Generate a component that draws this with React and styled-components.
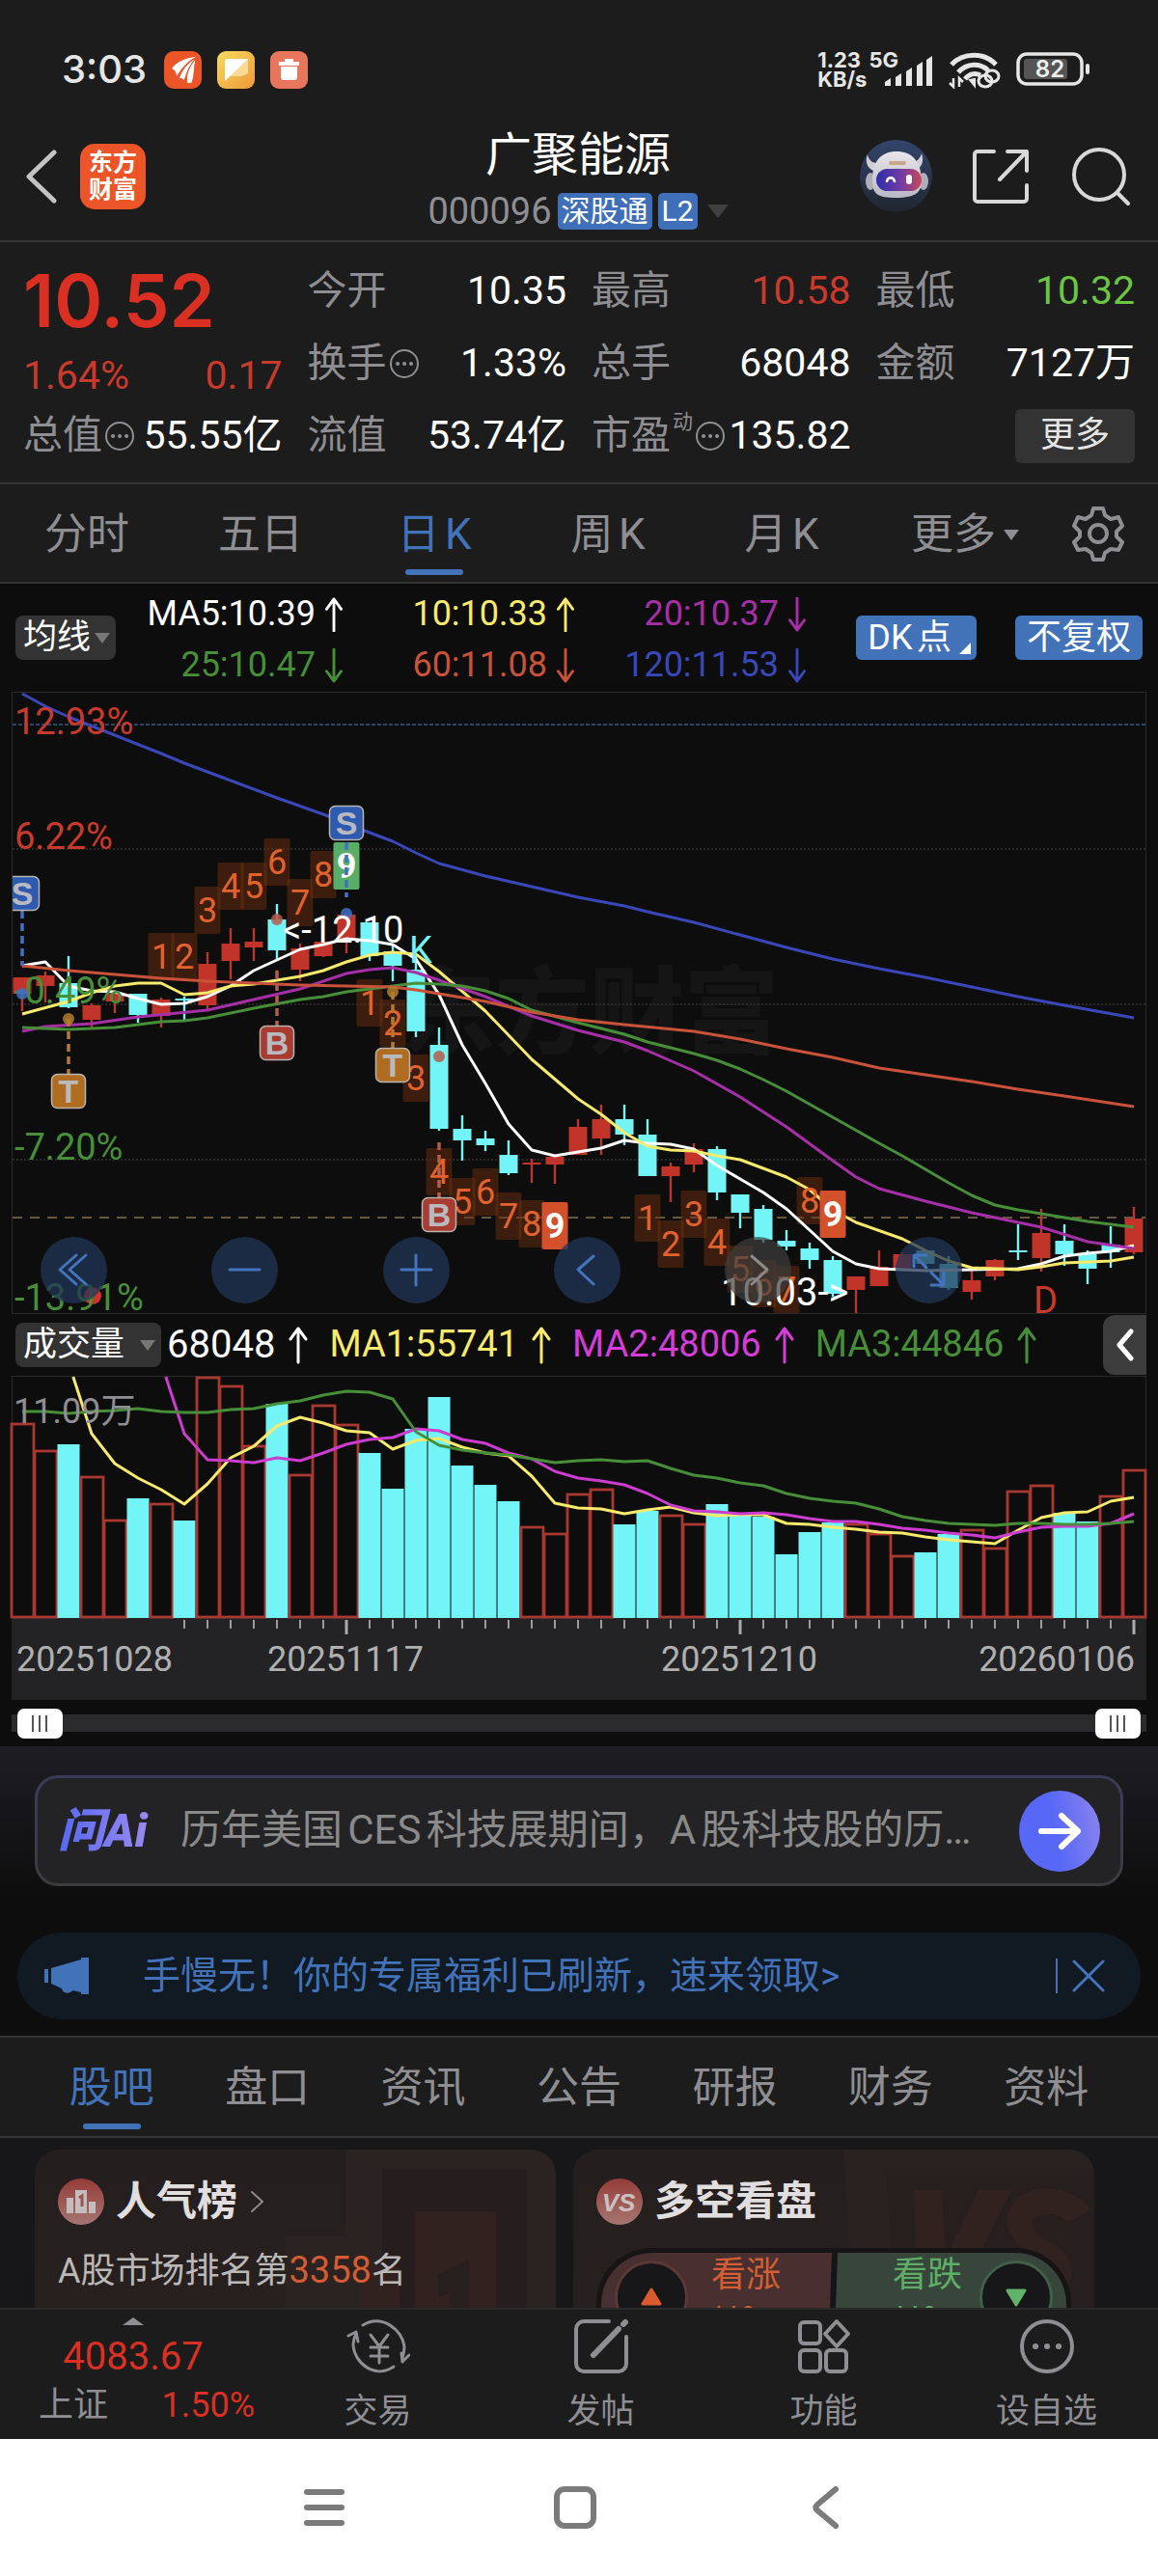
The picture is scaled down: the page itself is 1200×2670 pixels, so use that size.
import React from "react";
import styled, { createGlobalStyle, css } from "styled-components";

const GlobalStyle = createGlobalStyle`
  * { box-sizing: border-box; }
  html, body { margin: 0; background: #1c1c1c; }
  body {
    font-family: Roboto, "Noto Sans CJK SC", sans-serif;
    font-size: 36px;
    line-height: 1.2;
    color: #8e8e93;
    text-autospace: normal;
  }
  button { font: inherit; color: inherit; background: none; border: 0; padding: 0; cursor: pointer; }
  a { color: inherit; text-decoration: none; }
  svg { display: block; text-autospace: no-autospace; }
  h1, h2, p { margin: 0; font-weight: 400; }
`;

const C = {
  panel: "#1c1c1c",
  ink: "#0d0d0d",
  line: "#343436",
  red: "#c93a2c",
  brightRed: "#d93023",
  green: "#6cc644",
  blue: "#4272b8",
  cyan: "#73f4f6",
  grey: "#8e8e93",
};

/* ---------- frame ---------- */
const Phone = styled.div`
  display: flex;
  flex-direction: column;
  height: 100vh;
  background: ${C.panel};
  overflow: hidden;
`;
const Scroller = styled.main`
  flex: 1;
  min-height: 0;
  overflow: hidden;
`;

/* ---------- status bar ---------- */
const StatusBar = styled.div`
  display: flex;
  align-items: center;
  justify-content: space-between;
  padding: 38px 70px 0 64px;
  height: 106px;
  color: #e6e6e6;
`;
const Cluster = styled.div`
  display: flex;
  align-items: center;
  gap: ${(p) => p.$gap}px;
`;
const Clock = styled.span`
  font-family: Inter, sans-serif;
  font-size: 40px;
  font-weight: 500;
  margin-right: 2px;
`;
const NetSpeed = styled.span`
  font-family: Inter, sans-serif;
  font-size: 22px;
  line-height: 20px;
  font-weight: 700;
`;
const NetType = styled(NetSpeed)`
  align-self: flex-start;
  margin-right: -16px;
`;

/* ---------- title bar ---------- */
const TitleBar = styled.header`
  display: grid;
  grid-template-columns: 1fr auto 1fr;
  align-items: center;
  height: 145px;
  padding: 10px 28px 0 26px;
  border-bottom: 2px solid ${C.line};
`;
const TitleCentre = styled.div`
  display: flex;
  flex-direction: column;
  align-items: center;
  gap: 10px;
  padding-top: 6px;
`;
const StockName = styled.h1`
  font-size: 48px;
  line-height: 56px;
  color: #fff;
`;
const CodeRow = styled.div`
  display: flex;
  align-items: center;
  gap: 6px;
  font-size: 38px;
  line-height: 40px;
`;
const Tag = styled.span`
  background: #3f6fb8;
  color: #fff;
  font-size: 30px;
  line-height: 38px;
  padding: 0 4px;
  border-radius: 5px;
`;
const Caret = styled.span`
  display: inline-block;
  border: ${(p) => p.$size}px solid transparent;
  border-top: ${(p) => p.$size + 3}px solid ${(p) => p.$color};
  border-bottom: 0;
  margin-left: ${(p) => p.$gap || 0}px;
`;
const Logo = styled.a`
  display: grid;
  place-items: center;
  width: 68px;
  height: 68px;
  border-radius: 15px;
  background: #ec5528;
  color: #fff;
  font-size: 25px;
  line-height: 28px;
  font-weight: 700;
  text-align: center;
`;
const TitleTools = styled.div`
  display: flex;
  align-items: center;
  justify-content: flex-end;
  gap: 40px;
`;

/* ---------- quote ---------- */
const Quote = styled.section`
  display: grid;
  grid-template-columns: repeat(4, 1fr);
  grid-auto-rows: 75px;
  column-gap: 26px;
  padding: 13px 24px 11px;
  border-bottom: 2px solid ${C.line};
`;
const PriceBox = styled.div`
  grid-row: span 2;
  color: ${C.brightRed};
`;
const Price = styled.div`
  font-family: Inter, sans-serif;
  font-size: 76px;
  line-height: 94px;
  font-weight: 600;
`;
const ChangeRow = styled.div`
  display: flex;
  justify-content: space-between;
  line-height: 62px;
  font-size: 41px;
  color: ${C.red};
`;
const Cell = styled.div`
  display: flex;
  align-items: center;
  justify-content: space-between;
  white-space: nowrap;
  font-size: 41px;
  text-autospace: no-autospace;
`;
const CellLabel = styled.span`
  display: flex;
  align-items: center;
  gap: 2px;
`;
const CellValue = styled.span`
  color: ${(p) => p.$color || "#fff"};
`;
const Sup = styled.sup`
  font-size: 21px;
  line-height: 20px;
  align-self: flex-start;
`;
const MoreButton = styled.button`
  margin-left: auto;
  width: 124px;
  height: 56px;
  border-radius: 6px;
  background: #333;
  color: #e6e6e6;
  font-size: 36px;
`;

/* ---------- period and section tabs ---------- */
const Tabs = styled.nav`
  display: flex;
  height: ${(p) => p.$height}px;
  padding: ${(p) => p.$pad};
  border-bottom: 2px solid ${C.line};
  ${(p) => p.$top && css`border-top: 2px solid ${C.line};`}
  background: ${C.panel};
`;
const Tab = styled.button`
  flex: ${(p) => p.$grow || 45} 1 0;
  display: flex;
  align-items: center;
  justify-content: center;
  position: relative;
  padding-top: 3px;
  font-size: 44px;
  white-space: nowrap;
  color: ${(p) => (p.$on ? C.blue : C.grey)};
  &::after {
    content: "";
    display: ${(p) => (p.$on ? "block" : "none")};
    position: absolute;
    left: 50%;
    bottom: 7px;
    width: 60px;
    height: 6px;
    margin-left: -30px;
    border-radius: 3px;
    background: ${C.blue};
  }
`;
const SettingsTab = styled(Tab)`
  padding-top: 0;
`;

/* ---------- indicators ---------- */
const Dark = styled.section`
  background: ${C.ink};
`;
const MaBar = styled.div`
  display: flex;
  align-items: center;
  height: 112px;
  padding: 0 16px;
`;
const Picker = styled.button`
  display: flex;
  align-items: center;
  justify-content: center;
  height: 46px;
  padding: 0 6px 0 8px;
  border-radius: 8px;
  background: #333;
  color: #fff;
  font-size: 35px;
  white-space: nowrap;
`;
const MaGrid = styled.div`
  display: grid;
  grid-template-columns: repeat(3, 240px);
  grid-auto-rows: 53px;
  margin-right: auto;
  margin-left: -4px;
  padding-top: 4px;
`;
const Reading = styled.span`
  display: flex;
  align-items: center;
  justify-content: ${(p) => (p.$end ? "flex-end" : "flex-start")};
  gap: ${(p) => (p.$end ? 9 : 14)}px;
  font-size: ${(p) => p.$size}px;
  color: ${(p) => p.$color};
  white-space: nowrap;
`;
const BlueButton = styled.button`
  display: flex;
  align-items: flex-end;
  justify-content: center;
  height: 46px;
  line-height: 46px;
  padding: 0 12px;
  margin-left: 40px;
  border-radius: 6px;
  background: ${C.blue};
  color: #fff;
  font-size: 36px;
`;
const Corner = styled.i`
  border-left: 12px solid transparent;
  border-bottom: 12px solid #fff;
  margin: 0 -6px 6px 8px;
`;
const ChartFrame = styled.div`
  position: relative;
  margin: 0 12px;
  border: 1px solid #29292b;
  svg { width: 100%; height: auto; overflow: visible; }
`;
const ZoomBar = styled.div`
  position: absolute;
  left: 2.5%;
  right: 16.2%;
  bottom: 10px;
  display: flex;
  justify-content: space-between;
`;
const RoundButton = styled.button`
  width: 69px;
  height: 69px;
  border-radius: 50%;
  display: grid;
  place-items: center;
  background: ${(p) => (p.$off ? "rgba(62,62,62,.7)" : "rgba(34,53,87,.75)")};
  color: ${(p) => (p.$off ? "#8a8a8a" : "#4474bd")};
  && svg { width: 45px; height: 45px; }
`;
const VolumeBar = styled.div`
  display: flex;
  align-items: center;
  gap: 22px;
  height: 64px;
  padding: 0 12px 0 16px;
`;
const CollapseButton = styled.button`
  display: grid;
  place-items: center;
  width: 45px;
  height: 62px;
  margin-left: auto;
  border-radius: 12px 0 0 12px;
  background: #3c3c3c;
  color: #fff;
`;
const DateAxis = styled.div`
  margin: 0 12px;
  background: #232325;
  svg { width: 100%; height: auto; }
`;
const RangeRow = styled.div`
  display: grid;
  align-items: center;
  height: 48px;
  padding: 0 18px;
  background: linear-gradient(#2b2b2d, #2b2b2d) 12px 15px / calc(100% - 24px) 18px no-repeat;
`;
const Range = styled.input`
  grid-area: 1 / 1;
  width: 100%;
  height: 30px;
  margin: 0;
  appearance: none;
  background: none;
  pointer-events: none;
  &::-webkit-slider-thumb {
    appearance: none;
    pointer-events: auto;
    width: 47px;
    height: 31px;
    border-radius: 7px;
    background:
      linear-gradient(#555, #555) 15px 7px / 2px 17px no-repeat,
      linear-gradient(#555, #555) 22px 7px / 2px 17px no-repeat,
      linear-gradient(#555, #555) 29px 7px / 2px 17px no-repeat,
      #fff;
  }
`;

/* ---------- assistant and notice ---------- */
const AskArea = styled.section`
  padding: 30px 36px 48px;
  background: linear-gradient(#1d1d23, ${C.ink} 85%);
`;
const AskBox = styled.div`
  display: flex;
  align-items: center;
  height: 115px;
  padding: 0 21px;
  border: 3px solid transparent;
  border-radius: 24px;
  background:
    linear-gradient(#232325, #232325) padding-box,
    linear-gradient(#3a3b58, #3c3c3e) border-box;
`;
const AskLogo = styled.span`
  font-size: 48px;
  font-weight: 900;
  font-style: italic;
  line-height: 56px;
  width: 127px;
  background: linear-gradient(90deg, #5668f2, #a08cf0 80%);
  -webkit-background-clip: text;
  color: transparent;
  white-space: nowrap;
  text-autospace: no-autospace;
`;
const AskText = styled.a`
  flex: 1;
  min-width: 0;
  overflow: hidden;
  text-overflow: ellipsis;
  white-space: nowrap;
  font-size: 42px;
  color: #8a8a8a;
`;
const SendButton = styled.button`
  display: grid;
  place-items: center;
  width: 84px;
  height: 84px;
  margin-left: 24px;
  border-radius: 50%;
  background: linear-gradient(80deg, #5868f6 45%, #8c84ee);
  color: #fff;
`;
const Notice = styled.div`
  display: flex;
  align-items: center;
  height: 90px;
  margin: 0 18px;
  padding: 0 36px 0 28px;
  border-radius: 45px;
  background: #111922;
  color: ${C.blue};
`;
const NoticeText = styled.a`
  flex: 1;
  margin-left: 54px;
  font-size: 39px;
`;
const NoticeClose = styled.button`
  padding-left: 14px;
  border-left: 2px solid ${C.blue};
`;
const Spacer = styled.div`
  height: 17px;
`;

/* ---------- cards ---------- */
const Cards = styled.section`
  display: flex;
  gap: 18px;
  padding: 12px 36px;
  background: #17171a;
`;
const Card = styled.article`
  position: relative;
  flex: 0 0 540px;
  height: 260px;
  padding: 30px 24px;
  border-radius: 26px;
  background: linear-gradient(#241e1e, #28211f);
  overflow: hidden;
`;
const CardArt = styled.svg`
  position: absolute;
  right: 0;
  top: 0;
  width: 280px;
  height: 260px;
`;
const CardHead = styled.h2`
  position: relative;
  display: flex;
  align-items: center;
  gap: 12px;
  height: 48px;
  font-size: 42px;
  font-weight: 700;
  color: #e0dede;
`;
const Rank = styled.p`
  position: relative;
  margin-top: 26px;
  font-size: 36px;
  line-height: 42px;
  color: #bbb8b8;
  text-autospace: no-autospace;
  b { font-weight: 400; font-size: 38px; color: #d35c34; }
`;
const Vote = styled.div`
  position: relative;
  display: flex;
  height: 126px;
  margin-top: 24px;
  border: 5px solid #171416;
  border-radius: 58px;
  overflow: hidden;
  background: #171416;
`;
const VoteSide = styled.button`
  flex: 1;
  display: flex;
  flex-direction: ${(p) => (p.$down ? "row-reverse" : "row")};
  align-items: flex-start;
  gap: ${(p) => (p.$down ? 18 : 24)}px;
  padding: 8px 14px;
  text-align: left;
  background: ${(p) => (p.$down ? "#37453b" : "#47302f")};
  color: ${(p) => (p.$down ? "#5fae68" : "#d35f33")};
  clip-path: ${(p) =>
    p.$down
      ? "polygon(4px 0, 100% 0, 100% 100%, 0 100%)"
      : "polygon(0 0, calc(100% - 2px) 0, calc(100% - 6px) 100%, 0 100%)"};
`;
const VoteDot = styled.span`
  display: grid;
  place-items: center;
  width: 76px;
  height: 76px;
  border-radius: 50%;
  background: #17171a;
  border: 3px solid ${(p) => (p.$down ? "#41604a" : "#5c3835")};
`;
const VoteText = styled.span`
  line-height: 46px;
  margin-top: -8px;
`;

/* ---------- bottom bar ---------- */
const BottomBar = styled.nav`
  display: flex;
  height: 136px;
  border-top: 2px solid #2a2a2a;
  background: ${C.panel};
`;
const IndexBox = styled.a`
  flex: 0 0 276px;
  display: flex;
  flex-direction: column;
  align-items: center;
  padding-top: 8px;
  color: ${C.brightRed};
`;
const IndexValue = styled.span`
  font-size: 40px;
  line-height: 46px;
  margin-top: 10px;
`;
const IndexRow = styled.span`
  align-self: flex-end;
  display: flex;
  justify-content: space-between;
  width: 236px;
  padding-right: 12px;
  font-size: 36px;
  line-height: 44px;
  margin-top: 5px;
  span { color: ${C.grey}; }
`;
const Action = styled.button`
  flex: 1;
  display: flex;
  flex-direction: column;
  align-items: center;
  gap: 14px;
  padding-top: 8px;
  font-size: 35px;
  line-height: 48px;
`;
const SystemNav = styled.nav`
  display: flex;
  justify-content: center;
  align-items: center;
  height: 142px;
  padding: 0 8px 0 0;
  background: #fff;
  color: #7b7b7b;
`;
const SystemKey = styled.button`
  width: 260px;
  display: grid;
  place-items: center;
`;

/* ---------- icons ---------- */
const Stroke = ({ w, h = w, box, sw = 4, children, ...rest }) => (
  <svg width={w} height={h} viewBox={box || `0 0 ${w} ${h}`} fill="none" stroke="currentColor" strokeWidth={sw} strokeLinecap="round" strokeLinejoin="round" aria-hidden="true" {...rest}>
    {children}
  </svg>
);
const Arrow = ({ down, h = 36 }) => (
  <Stroke w={20} h={h} box="0 0 20 38" sw={3}>
    {down ? <path d="M10 1V36M2 25L10 36L18 25" /> : <path d="M10 37V2M2 13L10 2L18 13" />}
  </Stroke>
);
const Info = () => (
  <Stroke w={32} sw={2}>
    <circle cx="16" cy="16" r="14" />
    <path d="M9 16h.1M16 16h.1M23 16h.1" strokeWidth={4} />
  </Stroke>
);
const Gear = () => (
  <Stroke w={54} h={58} box="0 0 54 58" sw={4}>
    <path d="M22 3h10l2 7 6 4 8-2 4 9-6 6v5l6 6-4 8-8-1-6 4-2 7H22l-2-7-6-4-8 1-4-8 6-6v-5l-6-6 4-9 8 2 6-4z" />
    <circle cx="27" cy="29" r="9" />
  </Stroke>
);
const Robot = () => (
  <svg width="75" height="75" viewBox="0 0 75 75" aria-hidden="true">
    <defs>
      <linearGradient id="sky" x1="0" y1="0" x2="0" y2="1"><stop offset="0" stopColor="#33456b" /><stop offset="1" stopColor="#20252f" /></linearGradient>
      <linearGradient id="visor"><stop offset="0" stopColor="#2e2fa8" /><stop offset=".5" stopColor="#6a3aa8" /><stop offset="1" stopColor="#c8485a" /></linearGradient>
      <linearGradient id="shell" x1="0" y1="0" x2="0" y2="1"><stop offset="0" stopColor="#e8e6ea" /><stop offset="1" stopColor="#b9b8c4" /></linearGradient>
    </defs>
    <circle cx="37.5" cy="37.5" r="37.5" fill="url(#sky)" />
    <path d="M8 15c-3 8 0 14 6 17l7-8c-6 1-12-2-13-9zM64 14c3 8 0 14-5 17l-8-8c6 1 11-2 13-9z" fill="#d0cfd6" />
    <ellipse cx="11" cy="43" rx="5" ry="9" fill="#aeadb8" />
    <ellipse cx="66" cy="43" rx="5" ry="9" fill="#aeadb8" />
    <path d="M13 42C13 22 22 12 38 12s25 10 26 28c1 14-6 20-26 20S13 56 13 42z" fill="url(#shell)" />
    <rect x="17" y="30" width="47" height="23" rx="11.5" fill="url(#visor)" />
    <path d="M28 43c1-5 7-5 8 0" stroke="#fff" strokeWidth="2.5" fill="none" strokeLinecap="round" />
    <rect x="48" y="36" width="6" height="10" rx="3" fill="#fff" />
    <rect x="30" y="22" width="18" height="4" rx="2" fill="#c9a58c" />
  </svg>
);
const AppIcons = () => (
  <>
    <svg width="39" height="39" viewBox="0 0 39 39" aria-hidden="true">
      <rect width="39" height="39" rx="10" fill="#ec5528" />
      <path d="M8 18C13 11 22 7 33 6 25 10 20 15 13 26c0-3-1-6-5-8z" fill="#fff" />
      <path d="M15 29c3-9 9-17 18-22-6 7-9 14-12 24-1-2-3-3-6-2z" fill="#fff" stroke="#ec5528" strokeWidth="1" />
      <path d="M24 34c-2-9 2-19 9-26-2 8-1 16-4 25z" fill="#fff" stroke="#ec5528" strokeWidth="1" />
    </svg>
    <svg width="39" height="39" viewBox="0 0 39 39" aria-hidden="true">
      <defs><linearGradient id="note" x2="1" y2="1"><stop stopColor="#f6dc5c" /><stop offset="1" stopColor="#f0983a" /></linearGradient></defs>
      <rect width="39" height="39" rx="9" fill="url(#note)" />
      <path d="M8 11a3 3 0 013-3h21v15L25 26H14L8 31z" fill="#fbd996" />
      <path d="M8 11a3 3 0 013-3h21L8 31z" fill="#fff" />
    </svg>
    <svg width="39" height="39" viewBox="0 0 39 39" aria-hidden="true">
      <rect width="39" height="39" rx="9" fill="#e8765c" />
      <path d="M9 11h21v4H9zM15 8h9v3h-9zM11 16h17v11a3 3 0 01-3 3H14a3 3 0 01-3-3z" fill="#fff" />
    </svg>
  </>
);
const Signal = () => (
  <svg width="50" height="34" viewBox="0 0 50 34" fill="#e6e6e6" aria-hidden="true">
    {[[0, 8], [11, 13], [22, 19], [33, 25], [43, 31]].map(([x, h]) => (
      <path key={x} d={`M${x} ${34 - h + 4}L${x + 6} ${34 - h}V34H${x}z`} />
    ))}
  </svg>
);
const Wifi = () => (
  <svg width="54" height="40" viewBox="0 0 54 40" fill="none" stroke="#e6e6e6" aria-hidden="true">
    <path d="M3 15C15 2 37 2 49 15" strokeWidth="5" />
    <path d="M10 23C19 13 33 13 41 21" strokeWidth="5" />
    <path d="M17 30C21 25 27 23 33 26" strokeWidth="5" />
    <path d="M27 30v7l-5-6z" strokeWidth="2" fill="#e6e6e6" />
    <ellipse cx="38" cy="32" rx="7" ry="6" strokeWidth="3" />
    <ellipse cx="45" cy="27" rx="7" ry="6" strokeWidth="3" />
    <path d="M5 29v9l-4-4M11 38v-9l4 4" strokeWidth="2.5" />
  </svg>
);
const Battery = () => (
  <svg width="77" height="36" viewBox="0 0 77 36" aria-hidden="true">
    <rect x="2" y="2" width="66" height="31" rx="9" fill="none" stroke="#e6e6e6" strokeWidth="3.5" />
    <rect x="8" y="7" width="45" height="21" rx="3" fill="#555" />
    <rect x="72" y="12" width="4" height="11" rx="2" fill="#e6e6e6" />
    <text x="35" y="26" textAnchor="middle" fontFamily="Inter, sans-serif" fontSize="24" fontWeight="600" fill="#eee">82</text>
  </svg>
);

/* ---------- price chart ---------- */
const cx = (i) => 10 + 24 * i;
const trace = (points) => points.map(([i, y]) => `${cx(i)},${y}`).join(" ");

// direction, body top, body bottom, high, low
const CANDLES = [
  ["r", 295, 312, 295, 330], ["r", 293, 304, 289, 321], ["c", 301, 326, 273, 327], ["r", 324, 339, 322, 347],
  ["r", 312, 320, 312, 332], ["c", 312, 334, 312, 342], ["r", 318, 335, 316, 347], ["c", 317, 319, 315, 339],
  ["r", 281, 324, 269, 328], ["r", 260, 278, 244, 297], ["r", 258, 264, 244, 278], ["c", 235, 267, 219, 277],
  ["r", 265, 287, 260, 299], ["r", 258, 273, 231, 274], ["r", 230, 257, 230, 270], ["c", 238, 273, 238, 278],
  ["c", 268, 283, 262, 299], ["c", 287, 351, 270, 357], ["c", 365, 452, 347, 454], ["c", 452, 464, 438, 485],
  ["c", 462, 469, 454, 475], ["c", 479, 498, 464, 500], ["r", 487, 489, 483, 508], ["r", 481, 489, 481, 509],
  ["r", 450, 479, 442, 479], ["r", 442, 462, 427, 479], ["c", 442, 458, 427, 469], ["c", 458, 501, 442, 501],
  ["r", 491, 501, 487, 528], ["r", 473, 489, 467, 497], ["c", 473, 518, 470, 526], ["c", 520, 539, 520, 555],
  ["c", 535, 567, 531, 570], ["c", 568, 574, 557, 578], ["c", 576, 588, 570, 597], ["c", 588, 623, 584, 626],
  ["r", 605, 619, 605, 643], ["r", 595, 615, 578, 615], ["r", 582, 598, 580, 598], ["c", 578, 592, 578, 597],
  ["c", 592, 617, 584, 619], ["r", 609, 621, 597, 629], ["r", 588, 605, 587, 609], ["c", 578, 580, 551, 588],
  ["r", 560, 586, 535, 600], ["c", 568, 582, 551, 594], ["c", 582, 597, 578, 613], ["c", 572, 580, 553, 596],
  ["r", 545, 580, 533, 582],
];

const MA_LINES = [
  { color: "#3a47b8", pts: [[0, 1], [1, 14], [2, 25], [4, 44], [6, 63], [7, 73], [9, 91], [11, 109], [13, 126], [15, 145], [16, 154], [17, 166], [18, 177], [20, 190], [22, 201], [24, 212], [26, 221], [27, 227], [29, 238], [31, 251], [33, 264], [35, 276], [37, 286], [39, 295], [41, 305], [43, 315], [45, 324], [48, 337]] },
  { color: "#fff", pts: [[0, 283], [1, 279], [2, 304], [3, 309], [4, 310], [5, 317], [6, 323], [7, 322], [8, 315], [9, 304], [10, 288], [11, 277], [12, 266], [13, 261], [14, 255], [15, 257], [16, 261], [17, 276], [18, 313], [19, 365], [20, 405], [21, 447], [22, 474], [23, 480], [24, 476], [25, 472], [26, 464], [27, 467], [28, 468], [29, 473], [30, 490], [31, 504], [32, 518], [33, 535], [34, 557], [35, 579], [36, 592], [37, 597], [38, 598], [39, 599], [41, 598], [43, 597], [44, 592], [45, 584], [46, 581], [47, 579], [48, 573]] },
  { color: "#f8ea6c", pts: [[0, 333], [2, 320], [3, 311], [4, 304], [5, 301], [6, 301], [7, 313], [8, 311], [9, 304], [10, 302], [12, 294], [13, 288], [14, 279], [15, 272], [16, 269], [17, 271], [18, 289], [20, 330], [22, 380], [24, 421], [25, 437], [26, 456], [27, 470], [28, 474], [29, 475], [30, 480], [31, 484], [32, 493], [33, 502], [34, 515], [35, 536], [36, 549], [38, 566], [39, 578], [40, 589], [41, 596], [43, 598], [44, 595], [45, 591], [47, 589], [48, 585]] },
  { color: "#a62fa8", pts: [[0, 351], [1, 346], [3, 343], [5, 336], [8, 329], [10, 318], [12, 307], [14, 291], [15, 287], [16, 285], [17, 290], [18, 298], [20, 315], [22, 335], [24, 350], [26, 362], [27, 371], [29, 392], [31, 419], [33, 450], [35, 485], [36, 502], [37, 514], [39, 527], [41, 539], [43, 549], [44, 554], [46, 569], [48, 576]] },
  { color: "#468f38", pts: [[0, 347], [2, 349], [4, 347], [6, 341], [7, 340], [8, 337], [10, 327], [12, 318], [13, 315], [14, 310], [16, 304], [17, 301], [18, 302], [19, 304], [20, 309], [21, 317], [22, 329], [24, 342], [26, 354], [27, 362], [29, 374], [30, 381], [31, 390], [32, 401], [33, 413], [35, 440], [37, 467], [38, 480], [40, 508], [41, 521], [42, 531], [43, 536], [44, 540], [46, 548], [48, 554]] },
  { color: "#c9523a", pts: [[0, 283], [2, 288], [4, 292], [6, 296], [8, 299], [10, 301], [12, 303], [14, 304], [16, 305], [17, 308], [18, 312], [20, 320], [22, 331], [24, 339], [26, 344], [29, 351], [31, 359], [33, 369], [35, 378], [37, 389], [39, 396], [41, 403], [43, 411], [45, 418], [48, 429]] },
];

// bar index, count label, top
const COUNTS = [
  [6, 1, 249], [7, 2, 249], [8, 3, 201], [9, 4, 176], [10, 5, 176], [11, 6, 151], [12, 7, 193], [13, 8, 164],
  [14, 9, 155, "#58ad68"],
  [15, 1, 297], [16, 2, 318], [17, 3, 375], [18, 4, 472], [19, 5, 503], [20, 6, 493], [21, 7, 518], [22, 8, 526],
  [23, 9, 528, "#d2502a"],
  [27, 1, 520], [28, 2, 547], [29, 3, 516], [30, 4, 545], [31, 5, 573], [32, 6, 588], [33, 7, 594], [34, 8, 502],
  [35, 9, 516, "#d2502a"],
];

const SIGNS = [
  { i: 0, text: "S", y: 208, fill: "#2e5bb0", stem: [226, 283], dot: 312, tone: "#4070c8" },
  { i: 14, text: "S", y: 135, fill: "#2e5bb0", stem: [155, 212], dot: 229, tone: "#4070c8" },
  { i: 11, text: "B", y: 363, fill: "#a83c30", stem: [288, 346], dot: 235, tone: "#b95a4a" },
  { i: 2, text: "T", y: 413, fill: "#b06d20", stem: [338, 396], dot: 338, tone: "#b47c2a" },
  { i: 16, text: "T", y: 386, fill: "#b06d20", stem: [310, 368], dot: 310, tone: "#b47c2a" },
  { i: 18, text: "B", y: 541, fill: "#a83c30", stem: [466, 523], dot: 377, tone: "#b95a4a" },
];

const LEVELS = [
  ["12.93%", 43, C.red], ["6.22%", 162, C.red], ["-0.49%", 322, "#468f38"], ["-7.20%", 484, "#468f38"], ["-13.91%", 640, "#468f38"],
];

const PriceChart = () => (
  <svg viewBox="0 0 1174 643" role="img" aria-label="日K">
    <defs><clipPath id="plot"><rect width="1174" height="643" /></clipPath></defs>
    <text x="402" y="366" fontSize="98" fontWeight="900" fill="#151515">东方财富</text>
    <g strokeWidth="1.5">
      <path d="M0 33H1174" stroke="#33588c" strokeDasharray="4 2" />
      <path d="M0 162H1174M0 323H1174M0 484H1174" stroke="#333" strokeDasharray="2 2" />
      <path d="M0 544H1174" stroke="#85704f" strokeDasharray="10 8" />
    </g>
    <circle cx="83" cy="625" r="9" fill="#d9302a" />
    {CANDLES.map(([kind, top, bottom, high, low], i) => {
      const fill = kind === "r" ? "#c23329" : C.cyan;
      return (
        <g key={i} fill={fill}>
          <rect x={cx(i) - 1.2} y={high} width="2.4" height={low - high} />
          <rect x={cx(i) - 9.5} y={top} width="19" height={bottom - top} />
        </g>
      );
    })}
    {COUNTS.filter((c) => !c[3]).map(([i, , y]) => (
      <rect key={i} x={cx(i) - 13.5} y={y} width="27" height="49" rx="2" fill="#73300f" fillOpacity=".48" />
    ))}
    {MA_LINES.map(({ color, pts }) => (
      <polyline key={color} points={trace(pts)} fill="none" stroke={color} strokeWidth="3" strokeLinejoin="round" />
    ))}
    {COUNTS.map(([i, n, y, solid]) => (
      <g key={i}>
        {solid && <rect x={cx(i) - 13.5} y={y} width="27" height="49" rx="2" fill={solid} />}
        <text x={cx(i)} y={y + 37} fontSize="36" textAnchor="middle" fill={solid ? "#fff" : "#e2622e"} fontWeight={solid ? 700 : 400}>{n}</text>
      </g>
    ))}
    {LEVELS.map(([text, y, fill]) => (
      <text key={text} x="2" y={y} fontSize="38" fill={fill}>{text}</text>
    ))}
    <g clipPath="url(#plot)">
      {SIGNS.map((s) => (
        <g key={s.i}>
          <path d={`M${cx(s.i)} ${s.stem[0]}V${s.stem[1]}`} stroke={s.tone} strokeWidth="3.5" strokeDasharray="8 5" />
          <circle cx={cx(s.i)} cy={s.dot} r="6" fill={s.tone} fillOpacity=".85" />
          <rect x={cx(s.i) - 17.5} y={s.y - 17.5} width="35" height="35" rx="6" fill={s.fill} stroke="#b9b4b0" strokeWidth="1.5" />
          <text x={cx(s.i)} y={s.y + 12} fontFamily="Liberation Sans, sans-serif" fontWeight="700" fontSize="34" textAnchor="middle" fill="#b9b9c0">{s.text}</text>
        </g>
      ))}
    </g>
    <text x="411" y="280" fontSize="38" fill={C.cyan}>K</text>
    <text x="1058" y="643" fontSize="38" fill={C.red}>D</text>
    <text x="280" y="259" fontSize="38" fill="#fff">&lt;-12.10</text>
    <text x="734" y="635" fontSize="40" fill="#fff">10.03-&gt;</text>
  </svg>
);

/* ---------- volume chart ---------- */
const VOLUME = "r48 r76 c70 r103 r148 c126 r131 c149 r0 r9 r71 c28 r101 r29 r49 c79 c116 c54 c21 c92 c112 c129 r155 r162 r121 r116 c153 c139 r143 r152 c132 c143 c145 c184 c161 c151 r152 r162 r185 c182 c163 r158 r177 r118 r112 c141 c150 r123 r96"
  .split(" ")
  .map((v) => [v[0], Number(v.slice(1))]);
const series = (start, values) => values.map((y, k) => [start + k, y]);
const VOLUME_LINES = [
  { color: "#f8ea6c", pts: [[2.2, 0], ...series(3, [59, 90, 105, 117, 132, 111, 84, 72, 51, 42, 48, 56, 58, 75, 66, 64, 73, 79, 82, 103, 131, 136, 137, 142, 138, 135, 141, 144, 143, 143, 152, 153, 156, 158, 161, 162, 166, 169, 171, 173, 159, 146, 141, 140, 129, 125])] },
  { color: "#cb3ccf", pts: [[6.2, 0], ...series(7, [59, 86, 87, 89, 84, 87, 79, 70, 65, 63, 54, 56, 65, 69, 79, 85, 98, 105, 108, 112, 121, 133, 139, 140, 142, 141, 143, 147, 150, 150, 153, 157, 159, 162, 164, 167, 161, 156, 155, 155, 152, 142])] },
  { color: "#468f38", pts: series(0, [36, 36, 38, 36, 35, 33, 36, 37, 37, 34, 33, 28, 25, 19, 15, 16, 23, 57, 71, 76, 79, 81, 85, 89, 87, 86, 88, 87, 95, 102, 105, 110, 113, 121, 126, 129, 131, 137, 145, 149, 152, 153, 154, 152, 152, 153, 153, 152, 150]) },
];
const VolumeChart = () => (
  <svg viewBox="0 0 1174 250" role="img" aria-label="成交量">
    {VOLUME.map(([kind, top], i) =>
      kind === "c" ? (
        <rect key={i} x={cx(i) - 11.5} y={top} width="23" height={250 - top} fill={C.cyan} />
      ) : (
        <rect key={i} x={cx(i) - 11} y={top + 1} width="23" height={248 - top} fill="none" stroke="#a83830" strokeWidth="2.8" />
      )
    )}
    {VOLUME_LINES.map(({ color, pts }) => (
      <polyline key={color} points={trace(pts)} fill="none" stroke={color} strokeWidth="3" strokeLinejoin="round" />
    ))}
    <text x="1" y="48" fontSize="36" fill={C.grey}>11.09万</text>
  </svg>
);
const MAJOR = [14, 31, 48];
const Axis = () => (
  <svg viewBox="0 0 1176 84" role="img" aria-label="日期">
    {VOLUME.map((_, i) =>
      i < 7 ? null : (
        <path key={i} d={`M${cx(i) + 1} 1V${MAJOR.includes(i) ? 16 : 10}`} stroke="#aaa" strokeWidth={MAJOR.includes(i) ? 3 : 1.8} />
      )
    )}
    <g fontSize="36" fill="#b0b0b0">
      <text x="5" y="54">20251028</text>
      <text x={cx(14)} y="54" textAnchor="middle">20251117</text>
      <text x={cx(31)} y="54" textAnchor="middle">20251210</text>
      <text x="1164" y="54" textAnchor="end">20260106</text>
    </g>
  </svg>
);

const CELLS = [
  ["今开", "10.35"], ["最高", "10.58", C.red], ["最低", "10.32", C.green],
  ["换手", "1.33%", null, true], ["总手", "68048"], ["金额", "7127万"],
  ["总值", "55.55亿", null, true], ["流值", "53.74亿"], ["市盈", "135.82", null, true, "动"],
];
const MAS = [
  ["MA5:10.39", "#fff"], ["10:10.33", "#f8ea6c"], ["20:10.37", "#a62fa8", true],
  ["25:10.47", "#468f38", true], ["60:11.08", "#c9523a", true], ["120:11.53", "#3a47b8", true],
];
const VOLS = [["MA1:55741", "#f8ea6c"], ["MA2:48006", "#d63cd8"], ["MA3:44846", "#468f38"]];
const ACTIONS = [
  ["交易", <Stroke key="t" w={66} h={60} sw={3}><path d="M17 8C37-4 58 13 60 30c0 5-1 9-2 12M58 46l-1-9M58 46l7-7M49 51C30 64 8 48 7 28c0-4 1-7 3-11M10 15l-8 4M10 15l2 10" /><path d="M25 18l9 12 9-12M34 30v17M25 31h18M25 40h18" /></Stroke>],
  ["发帖", <Stroke key="p" w={60} h={60} sw={4}><path d="M38 4H12a8 8 0 00-8 8v36a8 8 0 008 8h36a8 8 0 008-8V20" /><path d="M22 39L48 12" strokeWidth="6" /><path d="M53 7l2-2" strokeWidth="6" /></Stroke>],
  ["功能", <Stroke key="f" w={56} h={60} sw={4}><rect x="3" y="5" width="21" height="22" rx="4" /><rect x="3" y="34" width="21" height="22" rx="4" /><rect x="30" y="34" width="21" height="22" rx="4" /><path d="M41 4l12 13-12 13-12-13z" /></Stroke>],
  ["设自选", <Stroke key="s" w={60} h={60} sw={4}><circle cx="30" cy="30" r="26" /><path d="M18 30h.1M30 30h.1M42 30h.1" strokeWidth="6" /></Stroke>],
];

export default function App() {
  return (
    <Phone>
      <GlobalStyle />
      <StatusBar>
        <Cluster $gap={16}>
          <Clock>3:03</Clock>
          <AppIcons />
        </Cluster>
        <Cluster $gap={16}>
          <Cluster $gap={2}>
            <NetSpeed>1.23<br />KB/s</NetSpeed>
            <NetType>5G</NetType>
            <Signal />
          </Cluster>
          <Wifi />
          <Battery />
        </Cluster>
      </StatusBar>

      <TitleBar>
        <Cluster $gap={24}>
          <button aria-label="返回"><Stroke w={33} h={56} sw={5} color="#c4c4c4"><path d="M30 3L4 28L30 53" /></Stroke></button>
          <Logo href="#">东方<br />财富</Logo>
        </Cluster>
        <TitleCentre>
          <StockName>广聚能源</StockName>
          <CodeRow>
            000096 <Tag>深股通</Tag><Tag>L2</Tag><Caret $size={11} $color="#404040" $gap={4} />
          </CodeRow>
        </TitleCentre>
        <TitleTools>
          <button aria-label="助手"><Robot /></button>
          <button aria-label="分享"><Stroke w={62} h={62} sw={4} color="#d8d8d8"><path d="M24 5H7a3 3 0 00-3 3v46a3 3 0 003 3h48a3 3 0 003-3V40M38 5h20v20M57 6L30 34" /></Stroke></button>
          <button aria-label="搜索"><Stroke w={64} h={62} sw={4} color="#d8d8d8"><circle cx="31" cy="29" r="26" /><path d="M50 48l11 11" /></Stroke></button>
        </TitleTools>
      </TitleBar>

      <Scroller>
        <Quote>
          <PriceBox>
            <Price>10.52</Price>
            <ChangeRow><span>1.64%</span><span>0.17</span></ChangeRow>
          </PriceBox>
          {CELLS.map(([label, value, color, info, sup]) => (
            <Cell key={label}>
              <CellLabel>{label}{sup && <Sup>{sup}</Sup>}{info && <Info />}</CellLabel>
              <CellValue $color={color}>{value}</CellValue>
            </Cell>
          ))}
          <Cell><MoreButton>更多</MoreButton></Cell>
        </Quote>

        <Tabs $height={103} $pad="0 24px 0 0">
          <Tab>分时</Tab>
          <Tab>五日</Tab>
          <Tab $on>日K</Tab>
          <Tab>周K</Tab>
          <Tab>月K</Tab>
          <Tab $grow={50}>更多<Caret $size={8} $color={C.grey} $gap={8} /></Tab>
          <SettingsTab $grow={19} aria-label="设置"><Gear /></SettingsTab>
        </Tabs>

        <Dark>
          <MaBar>
            <Picker>均线<Caret $size={8} $color="#777" $gap={4} /></Picker>
            <MaGrid>
              {MAS.map(([text, color, down]) => (
                <Reading key={text} $end $size={36} $color={color}>{text}<Arrow down={down} /></Reading>
              ))}
            </MaGrid>
            <BlueButton>DK点<Corner /></BlueButton>
            <BlueButton>不复权</BlueButton>
          </MaBar>
          <ChartFrame>
            <PriceChart />
            <ZoomBar>
              <RoundButton aria-label="最左"><Stroke w={45} sw={3}><path d="M25 7L8 22l17 15M35 7L18 22l17 15" /></Stroke></RoundButton>
              <RoundButton aria-label="缩小"><Stroke w={45} sw={3}><path d="M7 22h31" /></Stroke></RoundButton>
              <RoundButton aria-label="放大"><Stroke w={45} sw={3}><path d="M7 22h31M22 7v31" /></Stroke></RoundButton>
              <RoundButton aria-label="左移"><Stroke w={45} sw={3}><path d="M29 8L13 22l16 15" /></Stroke></RoundButton>
              <RoundButton aria-label="右移" $off><Stroke w={45} sw={3}><path d="M16 8l16 14-16 15" /></Stroke></RoundButton>
              <RoundButton aria-label="全屏"><Stroke w={45} sw={3}><path d="M7 19V7h13M8 8l12 12M38 25v13H25M37 37L25 25" /></Stroke></RoundButton>
            </ZoomBar>
          </ChartFrame>
          <VolumeBar>
            <Cluster $gap={6}>
              <Picker>成交量<Caret $size={8} $color="#777" $gap={16} /></Picker>
              <Reading $size={40} $color="#fff">68048<Arrow h={40} /></Reading>
            </Cluster>
            {VOLS.map(([text, color]) => (
              <Reading key={text} $size={38} $color={color}>{text}<Arrow h={40} /></Reading>
            ))}
            <CollapseButton aria-label="收起"><Stroke w={20} h={34} sw={5}><path d="M16 3L4 17l12 14" /></Stroke></CollapseButton>
          </VolumeBar>
          <ChartFrame><VolumeChart /></ChartFrame>
          <DateAxis><Axis /></DateAxis>
          <RangeRow>
            <Range type="range" aria-label="开始日期" defaultValue="0" />
            <Range type="range" aria-label="结束日期" defaultValue="100" />
          </RangeRow>

          <AskArea>
            <AskBox>
              <AskLogo>问Ai</AskLogo>
              <AskText href="#">历年美国CES科技展期间，A股科技股的历史表现如何</AskText>
              <SendButton aria-label="发送"><Stroke w={44} sw={6}><path d="M3 22h38M24 6l17 16-17 16" /></Stroke></SendButton>
            </AskBox>
          </AskArea>
          <Notice>
            <svg width="48" height="40" viewBox="0 0 48 40" fill={C.blue} aria-hidden="true">
              <path d="M0 13h4v14H0zM7 12L38 3V1h8v38h-8v-2l-9-2c-2 4-10 4-11-2L7 28z" />
            </svg>
            <NoticeText href="#">手慢无！你的专属福利已刷新，速来领取&gt;</NoticeText>
            <NoticeClose aria-label="关闭"><Stroke w={36} sw={3}><path d="M3 3l30 30M33 3L3 33" /></Stroke></NoticeClose>
          </Notice>
          <Spacer />
        </Dark>

        <Tabs $height={106} $pad="0 35px" $top>
          {["股吧", "盘口", "资讯", "公告", "研报", "财务", "资料"].map((t, i) => (
            <Tab key={t} $on={i === 0}>{t}</Tab>
          ))}
        </Tabs>

        <Cards>
          <Card>
            <CardArt viewBox="0 0 280 260" aria-hidden="true">
              <path d="M62 0h218v260H0V90h62z" fill="#2b2321" />
              <path d="M100 20h150v190H30V170h70z" fill="#261e1e" />
              <path d="M134 64h84v196h-84zM78 122h40v138H78z" fill="#31221f" />
              <path d="M158 130l32-16v90h-20v-56l-12 6z" fill="#271e1e" />
            </CardArt>
            <CardHead>
              <svg width="48" height="48" viewBox="0 0 48 48" aria-hidden="true">
                <defs><linearGradient id="rose" x1="0" y1="0" x2="0" y2="1"><stop stopColor="#963c38" /><stop offset="1" stopColor="#a57672" /></linearGradient></defs>
                <circle cx="24" cy="24" r="24" fill="url(#rose)" />
                <path d="M9 20h7v16H9zM18 12h12v24H18zM32 24h7v12h-7z" fill="#c4bdbd" />
                <path d="M22 20l3-2v11" stroke="#9a5450" strokeWidth="3" fill="none" />
              </svg>
              人气榜
              <Stroke w={16} h={24} sw={2} color="#8e8a8a"><path d="M3 2l11 10L3 22" /></Stroke>
            </CardHead>
            <Rank>A股市场排名第<b>3358</b>名</Rank>
          </Card>
          <Card>
            <CardArt viewBox="0 0 280 260" aria-hidden="true">
              <path d="M20 0h260v260H36z" fill="#2a2220" />
              <path d="M64 20h216v240H80z" fill="#271f1e" />
              <path d="M92 42h30l4 70 34-70h34l-60 120H98zM276 62l-24 14c-10-14-36-12-36 2 0 18 44 18 40 52-4 36-70 44-90 8l22-14c14 18 42 14 42 0 0-18-44-20-40-54 4-34 62-42 86-8z" fill="#32221f" />
            </CardArt>
            <CardHead>
              <svg width="48" height="48" viewBox="0 0 48 48" aria-hidden="true">
                <circle cx="24" cy="24" r="24" fill="url(#rose)" />
                <text x="23" y="34" textAnchor="middle" fontFamily="Liberation Sans, sans-serif" fontSize="26" fontWeight="700" fontStyle="italic" fill="#c9c2c2">VS</text>
              </svg>
              多空看盘
            </CardHead>
            <Vote>
              <VoteSide>
                <VoteDot><svg width="24" height="20" viewBox="0 0 24 20"><path d="M12 2l9 15H3z" fill="#da5c2e" stroke="#da5c2e" strokeWidth="3" strokeLinejoin="round" /></svg></VoteDot>
                <VoteText>看涨<br />**%</VoteText>
              </VoteSide>
              <VoteSide $down>
                <VoteDot $down><svg width="24" height="20" viewBox="0 0 24 20"><path d="M12 18l9-15H3z" fill="#5fb36a" stroke="#5fb36a" strokeWidth="3" strokeLinejoin="round" /></svg></VoteDot>
                <VoteText>看跌<br />**%</VoteText>
              </VoteSide>
            </Vote>
          </Card>
        </Cards>
      </Scroller>

      <BottomBar>
        <IndexBox href="#">
          <svg width="22" height="8" viewBox="0 0 22 8" aria-hidden="true"><path d="M11 0l11 8H0z" fill={C.grey} /></svg>
          <IndexValue>4083.67</IndexValue>
          <IndexRow><span>上证</span>1.50%</IndexRow>
        </IndexBox>
        {ACTIONS.map(([label, icon]) => (
          <Action key={label}>{icon}{label}</Action>
        ))}
      </BottomBar>
      <SystemNav>
        <SystemKey aria-label="菜单"><Stroke w={42} h={42} sw={6}><path d="M3 5h36M3 21h36M3 37h36" /></Stroke></SystemKey>
        <SystemKey aria-label="主页"><Stroke w={46} h={46} sw={6}><rect x="4" y="4" width="38" height="38" rx="8" /></Stroke></SystemKey>
        <SystemKey aria-label="后退"><Stroke w={28} h={44} sw={6}><path d="M24 3L5 19q-3 3 0 6l19 16" /></Stroke></SystemKey>
      </SystemNav>
    </Phone>
  );
}
